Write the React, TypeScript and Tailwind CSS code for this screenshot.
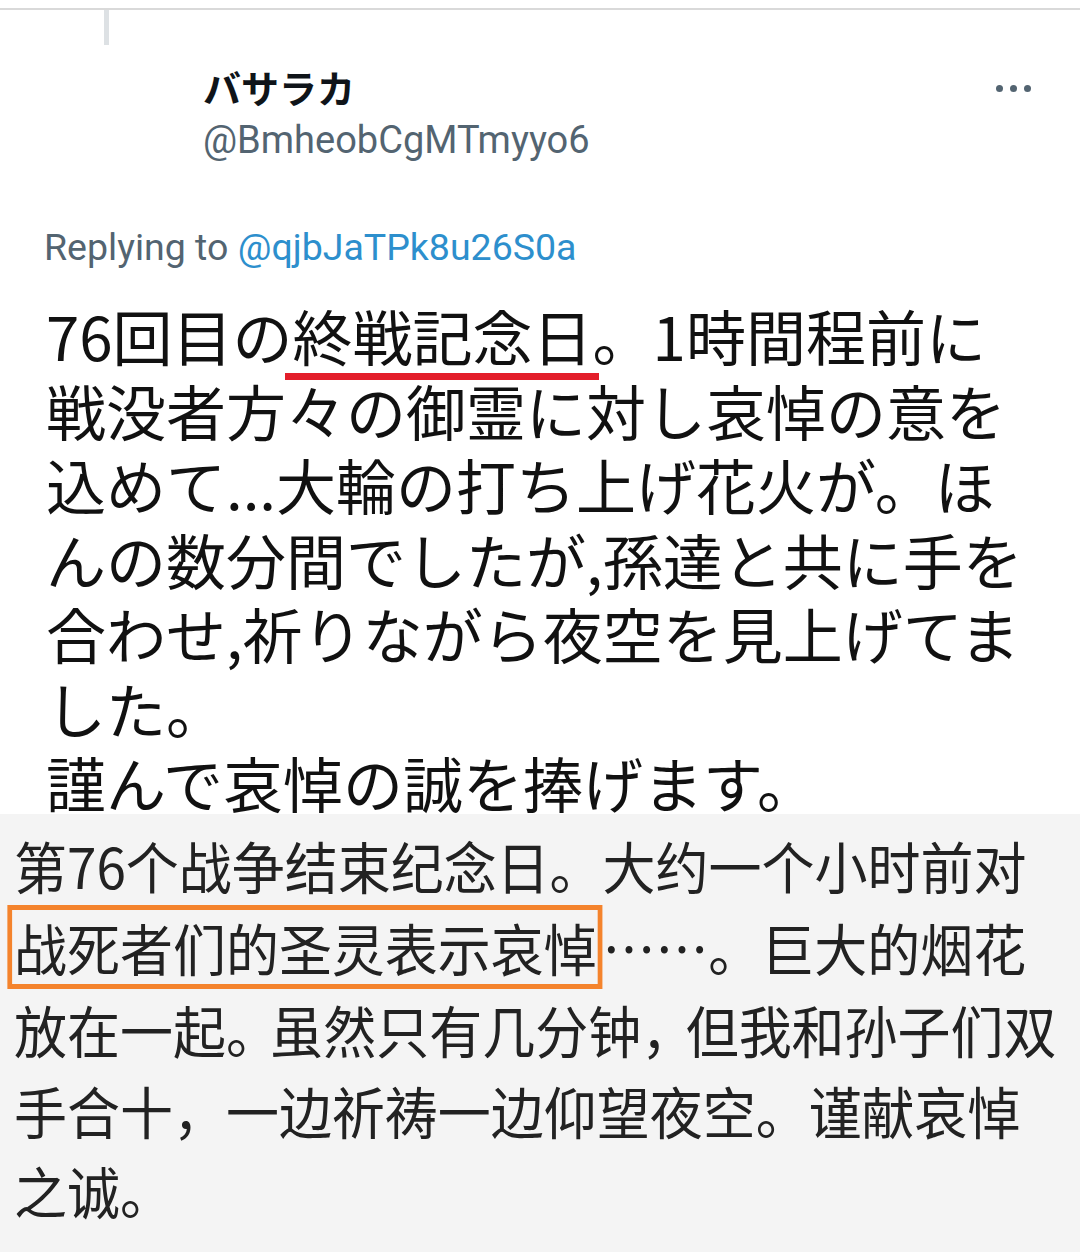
import React from "react";

const jpLines = [
  <>76回目の<span className="relative inline-block">終戦記念日<span className="absolute left-[-8px] right-[-6px] top-[75px] h-[7px] bg-[#e31e2a]" /></span>。1時間程前に</>,
  <>戦没者方々の御霊に対し哀悼の意を</>,
  <>込めて...大輪の打ち上げ花火が。ほ</>,
  <>んの数分間でしたが,孫達と共に手を</>,
  <>合わせ,祈りながら夜空を見上げてま</>,
  <>した。</>,
  <>謹んで哀悼の誠を捧げます。</>,
];

const cnLines = [
  <>第76个战争结束纪念日。大约一个小时前对</>,
  <>
    <span className="inline-block -ml-[7px] border-[5px] border-[#f4832c] pl-[2px] pr-[1px] leading-[74px]">战死者们的圣灵表示哀悼</span>……。巨大的烟花
  </>,
  <>放在一起<span className="tracking-[-9px]">。</span>虽然只有几分钟<span className="tracking-[-9px]">，</span>但我和孙子们双</>,
  <>手合十，一边祈祷一边仰望夜空。谨献哀悼</>,
  <>之诚。</>,
];

export default function App() {
  return (
    <div className="w-[1080px] h-[1252px] overflow-hidden bg-white flex flex-col">
      {/* top divider + thread line */}
      <div className="h-[8px]" />
      <div className="h-[2px] bg-[#d9d9d9]" />
      <div className="ml-[104px] w-[5px] h-[35px] bg-[#dde1e4]" />

      {/* header */}
      <div className="flex items-start pl-[203px] pr-[49px] mt-[18px]">
        <div className="flex-1 flex flex-col">
          <div className="text-[38px] leading-[48px] font-bold text-[#0f1419] [font-family:'Noto_Sans_CJK_JP',sans-serif]">
            バサラカ
          </div>
          <div className="mt-[5px] text-[38px] leading-[48px] text-[#536471] [font-family:Roboto,sans-serif]">
            @BmheobCgMTmyyo6
          </div>
        </div>
        <div className="flex gap-[7px] mt-[22px]">
          <span className="w-[7px] h-[7px] rounded-full bg-[#536471]" />
          <span className="w-[7px] h-[7px] rounded-full bg-[#536471]" />
          <span className="w-[7px] h-[7px] rounded-full bg-[#536471]" />
        </div>
      </div>

      {/* replying */}
      <div className="mt-[59px] pl-[44px] text-[37.5px] leading-[48px] text-[#536471] [font-family:Roboto,sans-serif]">
        Replying to <span className="text-[#2d8fcd]">@qjbJaTPk8u26S0a</span>
      </div>

      {/* original tweet */}
      <div className="mt-[27px] pl-[46px] text-[60px] leading-[74.5px] text-[#111] [font-family:'Noto_Sans_CJK_JP',sans-serif]">
        {jpLines.map((l, i) => (
          <div key={i} className="whitespace-nowrap">{l}</div>
        ))}
      </div>

      {/* translation */}
      <div className="-mt-[6px] flex-1 bg-[#f4f4f4] pt-[11px] pl-[14px] text-[56px] leading-[80.5px] text-[#222] [font-family:'Noto_Sans_CJK_SC',sans-serif]">
        {cnLines.map((l, i) => (
          <div key={i} className="whitespace-nowrap origin-left scale-x-[0.946]">{l}</div>
        ))}
      </div>
    </div>
  );
}
